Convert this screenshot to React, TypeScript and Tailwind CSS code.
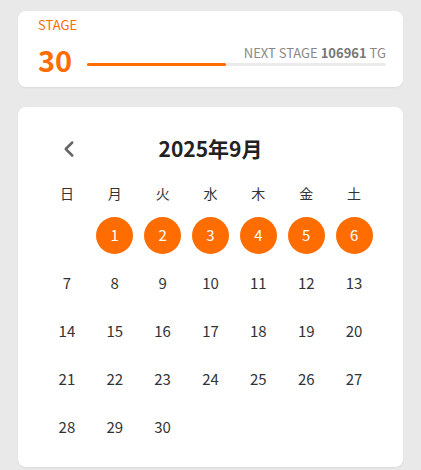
import { ChevronLeft } from 'lucide-react'

const days = ['日', '月', '火', '水', '木', '金', '土']
const marked = [1, 2, 3, 4, 5, 6]

export default function App() {
  // Sept 2025 starts on Monday
  const cells: (number | null)[] = [null]
  for (let d = 1; d <= 30; d++) cells.push(d)

  return (
    <div className="min-h-[470px] bg-[#e9e9e9] px-[18px] pt-[11px] font-['Noto_Sans_CJK_JP',sans-serif]">
      <div className="h-[76px] rounded-lg bg-white pl-[20px] pr-[17px] pt-[4px] shadow-[0_1px_2px_rgba(0,0,0,0.06)]">
        <div className="mb-[6px] text-[13px] leading-[20px] text-[#ff6c00]">STAGE</div>
        <div className="flex items-end gap-[15px]">
          <div className="text-[29px] font-bold leading-[36px] text-[#ff6c00]">30</div>
          <div className="flex-1 pb-[11px]">
            <div className="text-right text-[13px] leading-[18px] text-[#888]">
              NEXT STAGE <span className="font-bold text-[#777]">106961</span> TG
            </div>
            <div className="mt-[1px] h-[3px] rounded-full bg-[#ebebeb]">
              <div className="h-[3px] rounded-full bg-[#ff6c00]" style={{ width: '46.3%' }} />
            </div>
          </div>
        </div>
      </div>

      <div className="mt-[20px] h-[360px] rounded-lg bg-white px-[25px] pt-[22px] shadow-[0_1px_2px_rgba(0,0,0,0.06)]">
        <div className="grid h-10 grid-cols-[1fr_auto_1fr] items-center">
          <div className="pl-[13px] text-[#666]">
            <ChevronLeft size={26} strokeWidth={2.3} />
          </div>
          <div className="text-[21px] font-bold text-[#222]">2025年9月</div>
          <div />
        </div>
        <div className="mt-[6px] grid h-9 grid-cols-7 items-center">
          {days.map(d => (
            <div key={d} className="text-center text-[14px] text-[#333]">{d}</div>
          ))}
        </div>
        <div className="grid grid-cols-7">
          {cells.map((d, i) => (
            <div key={i} className="flex h-12 items-center justify-center">
              {d != null && (marked.includes(d) ? (
                <div className="flex h-[37px] w-[37px] items-center justify-center rounded-full bg-[#ff6c00] text-[15px] text-white">{d}</div>
              ) : (
                <div className="text-[15px] text-[#333]">{d}</div>
              ))}
            </div>
          ))}
        </div>
      </div>
    </div>
  )
}
